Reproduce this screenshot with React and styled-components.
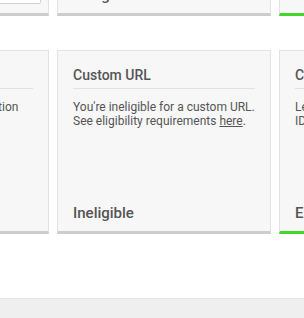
import React from "react";
import styled, { createGlobalStyle } from "styled-components";

const Global = createGlobalStyle`
  html, body { margin: 0; padding: 0; background: #ffffff; }
  body { font-family: Roboto, "Noto Sans", "Liberation Sans", sans-serif; overflow: hidden; }
`;

const Page = styled.div`
  display: flex;
  flex-direction: column;
  width: 304px;
  overflow: hidden;
`;

const Grid = styled.div`
  display: grid;
  grid-template-columns: repeat(3, 214px);
  column-gap: 8px;
  row-gap: 34px;
  margin: -168px 0 0 -165px;
  padding-bottom: 64px;
`;

const Card = styled.div`
  box-sizing: border-box;
  height: 184px;
  display: flex;
  flex-direction: column;
  background: #f7f7f7;
  border: 1px solid #e3e3e3;
  border-bottom: 3px solid ${(p) => (p.$eligible ? "#44d62c" : "#cccccc")};
  padding: 16px 15px 9px;
  color: #555555;
`;

const Title = styled.div`
  font-size: 14px;
  font-weight: 500;
  line-height: 17px;
  padding-bottom: 4px;
  border-bottom: 1px solid #e2e2e2;
  white-space: nowrap;
  overflow: hidden;
`;

const Body = styled.p`
  margin: 11px 0 0;
  font-size: 12px;
  line-height: 14.4px;
`;

const Link = styled.a`
  color: inherit;
  text-decoration: underline;
`;

const Status = styled.div`
  margin-top: auto;
  font-size: 15px;
  font-weight: 500;
  line-height: 18px;
`;

const ButtonRow = styled.div`
  margin-top: auto;
  display: flex;
  justify-content: flex-end;
  margin-bottom: 0;
  margin-right: -8px;
`;

const Button = styled.div`
  box-sizing: border-box;
  width: 120px;
  height: 30px;
  background: #ffffff;
  border: 1px solid #d0d0d0;
  border-radius: 2px;
`;

const Footer = styled.div`
  height: 40px;
  background: #efefef;
  border-top: 1px solid #e4e4e4;
`;

export default function App() {
  return (
    <Page>
      <Global />
      <Grid>
        <Card>
          <Title>Verification</Title>
          <Body>Request a verified badge for your profile.</Body>
          <ButtonRow>
            <Button />
          </ButtonRow>
        </Card>
        <Card>
          <Title>Profile Badge</Title>
          <Body>You're ineligible for a profile badge.</Body>
          <Status>Ineligible</Status>
        </Card>
        <Card $eligible>
          <Title>Custom ID</Title>
          <Body>Your account is in good standing.</Body>
          <Status>Eligible</Status>
        </Card>

        <Card>
          <Title>Verification</Title>
          <Body>Your profile needs a verification</Body>
          <Status>Ineligible</Status>
        </Card>
        <Card>
          <Title>Custom URL</Title>
          <Body>
            You're ineligible for a custom URL. See eligibility requirements{" "}
            <Link href="#">here</Link>.
          </Body>
          <Status>Ineligible</Status>
        </Card>
        <Card $eligible>
          <Title>Custom ID</Title>
          <Body>Let others find you by a custom ID.</Body>
          <Status>Eligible</Status>
        </Card>
      </Grid>
      <Footer />
    </Page>
  );
}
